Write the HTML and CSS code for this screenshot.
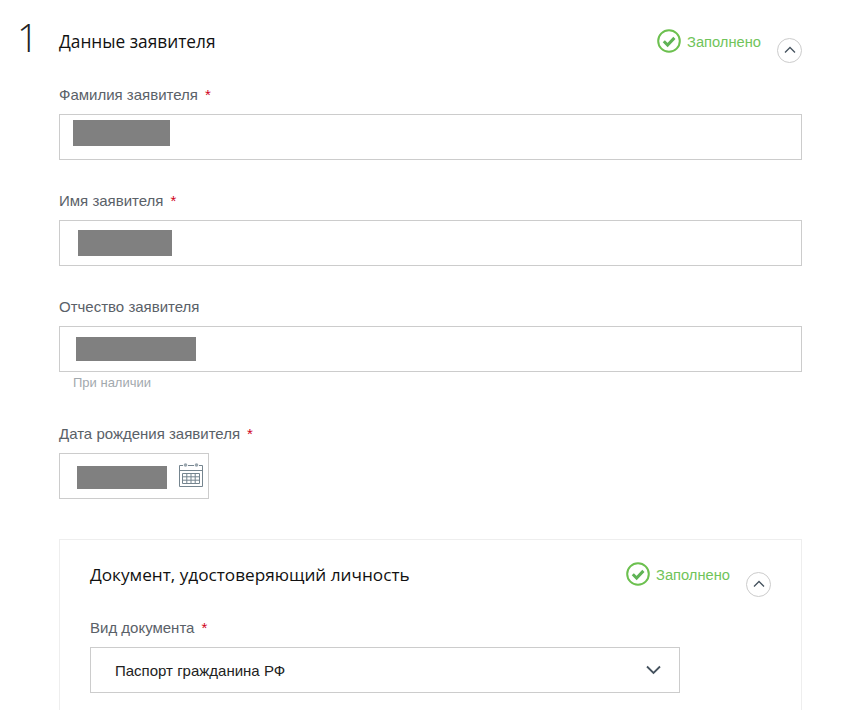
FILE: index.html
```html
<!DOCTYPE html>
<html lang="ru">
<head>
<meta charset="utf-8">
<title>Данные заявителя</title>
<link rel="stylesheet" href="styles.css">
</head>
<body>
<main class="page">
  <div class="step-num">1</div>
  <section class="step">
    <header class="head">
      <h2 class="title">Данные заявителя</h2>
      <div class="status">
        <svg class="ok" viewBox="0 0 24 24"><circle cx="12" cy="12" r="10.8" fill="none" stroke="#6cc04f" stroke-width="2"/><path d="M6.8 12.300l3.800 3.800 6.800-7.200" fill="none" stroke="#5fb356" stroke-width="3"/></svg>
        <span>Заполнено</span>
      </div>
      <button class="toggle"><svg viewBox="0 0 12 8"><path d="M1 6.500L6 1.500l5 5" fill="none" stroke="#45525e" stroke-width="1.300"/></svg></button>
    </header>

    <div class="field f1">
      <label class="label">Фамилия заявителя<i>*</i></label>
      <div class="input"><span class="mask m1"></span></div>
    </div>
    <div class="field f2">
      <label class="label">Имя заявителя<i>*</i></label>
      <div class="input"><span class="mask m2"></span></div>
    </div>
    <div class="field f2">
      <label class="label">Отчество заявителя</label>
      <div class="input"><span class="mask m3"></span></div>
      <div class="hint">При наличии</div>
    </div>
    <div class="field f3">
      <label class="label">Дата рождения заявителя<i>*</i></label>
      <div class="input date">
        <span class="mask m4"></span>
        <svg class="cal" viewBox="0 0 26 26"><g fill="none" stroke="#75858f" stroke-width="1"><path d="M5 3.500H1.500v21h23v-21H21M10 3.500h6"/><path d="M1.500 8.500h23"/><path d="M4.500 11.500h17v10h-17zM4.500 14.800h17M4.500 18.200h17M8.800 11.500v10M13 11.500v10M17.200 11.500v10"/></g><circle cx="7.500" cy="3" r="1.800" fill="#9aa6ae"/><circle cx="18.500" cy="3" r="1.800" fill="#9aa6ae"/></svg>
      </div>
    </div>

    <section class="card">
      <header class="head card-head">
        <h3 class="title">Документ, удостоверяющий личность</h3>
        <div class="status">
          <svg class="ok" viewBox="0 0 24 24"><circle cx="12" cy="12" r="10.8" fill="none" stroke="#6cc04f" stroke-width="2"/><path d="M6.8 12.300l3.800 3.800 6.800-7.200" fill="none" stroke="#5fb356" stroke-width="3"/></svg>
          <span>Заполнено</span>
        </div>
        <button class="toggle"><svg viewBox="0 0 12 8"><path d="M1 6.500L6 1.500l5 5" fill="none" stroke="#45525e" stroke-width="1.300"/></svg></button>
      </header>
      <label class="label doc-label">Вид документа<i>*</i></label>
      <div class="input select">
        <span>Паспорт гражданина РФ</span>
        <svg class="chev" viewBox="0 0 15 10"><path d="M1 1.500l6.500 6.500L14 1.500" fill="none" stroke="#45525e" stroke-width="1.800"/></svg>
      </div>
    </section>
  </section>
</main>
</body>
</html>
```
FILE: styles.css
```css
html, body {
  margin: 0;
  padding: 0;
  background: #fff;
}
body {
  height: 710px;
  overflow: hidden;
  font-family: "Liberation Sans", Arial, sans-serif;
}
.page {
  display: flex;
  width: 802px;
  padding-top: 17px;
}
.step-num {
  width: 59px;
  padding-left: 17px;
  box-sizing: border-box;
  font-family: "Open Sans", sans-serif;
  font-size: 38px;
  font-weight: 300;
  line-height: 40px;
  color: #222;
}
.step {
  flex: 1;
  min-width: 0;
}
.head {
  display: flex;
  align-items: flex-start;
  height: 48px;
}
.title {
  margin: 0;
  flex: 1;
  padding-top: 13px;
  font-family: "Open Sans", sans-serif;
  font-size: 17.300px;
  font-weight: 400;
  line-height: 24px;
  color: #111;
}
.status {
  display: flex;
  align-items: flex-start;
  gap: 6px;
  margin-top: 12px;
  font-size: 14.700px;
  line-height: 24px;
  color: #70c45a;
}
.status span {
  margin-top: 1px;
}
.ok {
  width: 24px;
  height: 24px;
}
.toggle {
  display: flex;
  align-items: center;
  justify-content: center;
  width: 25px;
  height: 25px;
  margin: 21px 0 0 16px;
  padding: 0;
  border: 1px solid #ccc;
  border-radius: 50%;
  background: #fff;
}
.toggle svg {
  width: 12px;
  height: 8px;
  margin-top: -1px;
}
.field.f1 { margin-top: 21px; }
.field.f2 { margin-top: 32px; }
.field.f3 { margin-top: 34px; }
.label {
  display: block;
  height: 18px;
  margin-bottom: 10px;
  font-size: 15px;
  line-height: 18px;
  color: #5a6168;
}
.label i {
  margin-left: 7px;
  font-style: normal;
  color: #d0021b;
}
.input {
  display: flex;
  align-items: center;
  height: 46px;
  box-sizing: border-box;
  border: 1px solid #ccc;
  background: #fff;
}
.mask {
  display: block;
  background: #808080;
}
.m1 { width: 97px; height: 26px; margin: -8px 0 0 13px; }
.m2 { width: 94px; height: 26px; margin: -1px 0 0 18px; }
.m3 { width: 120px; height: 24px; margin: 0 0 0 16px; }
.m4 { width: 90px; height: 23px; margin: 3px 0 0 17px; }
.hint {
  margin: 4px 0 0 14px;
  padding-bottom: 1px;
  font-size: 13px;
  line-height: 14px;
  color: #a2a9ae;
}
.date {
  width: 150px;
}
.cal {
  width: 26px;
  height: 26px;
  margin: -2px 0 0 11px;
}
.card {
  height: 200px;
  margin-top: 40px;
  padding: 0 30px;
  border: 1px solid #eee;
}
.card-head {
  height: 72px;
}
.card-head .title {
  padding-top: 23px;
  font-size: 17.200px;
}
.card-head .status {
  margin-top: 22px;
}
.card-head .toggle {
  margin-top: 32px;
}
.doc-label {
  margin: 7px 0 0;
  height: 20px;
}
.select {
  justify-content: space-between;
  width: 590px;
  margin-top: 8px;
  padding: 0 18px 0 24px;
  font-size: 15px;
  color: #222;
}
.chev {
  width: 15px;
  height: 10px;
}
```
